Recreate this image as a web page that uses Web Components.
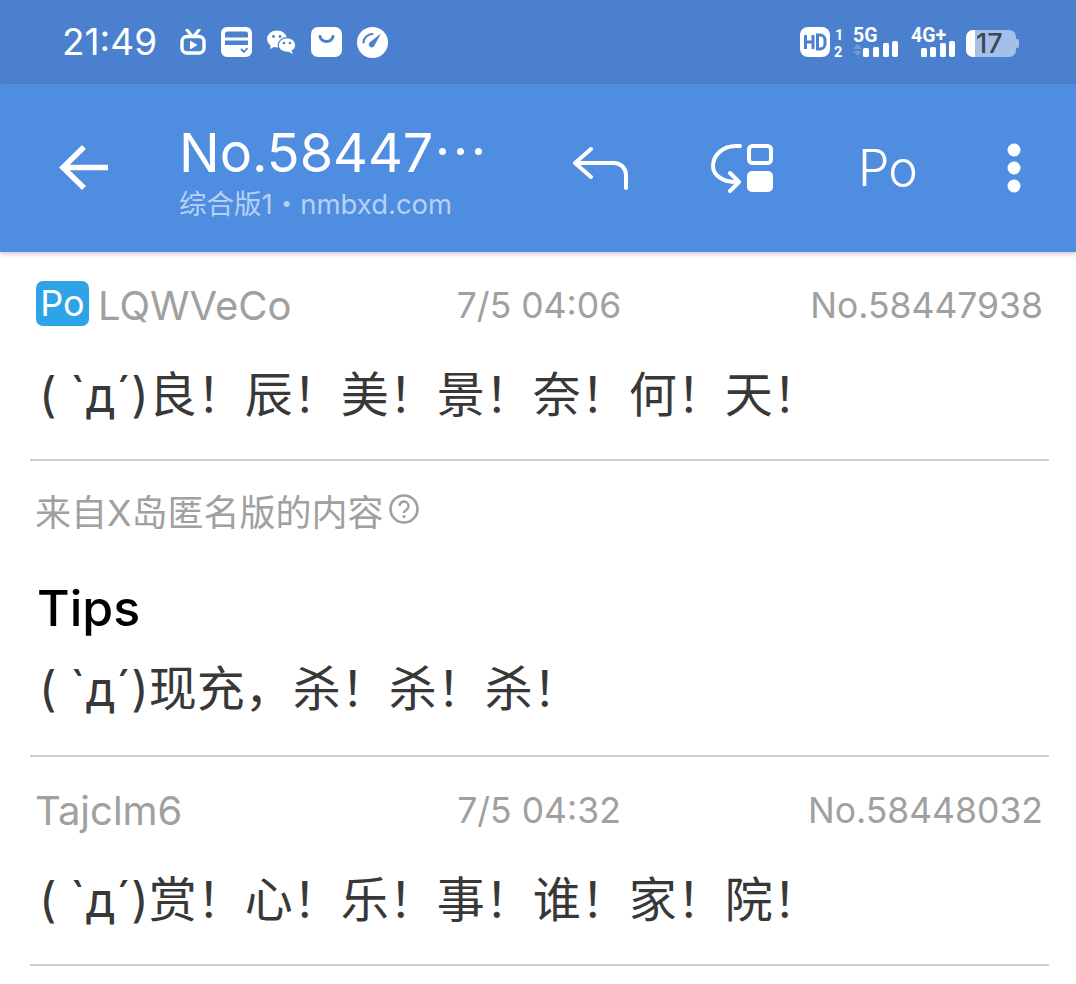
<!DOCTYPE html>
<html lang="zh">
<head>
<meta charset="utf-8">
<title>No.58447938</title>
<style>
  html, body { margin: 0; padding: 0; background: #fff; }
  body { font-family: Inter, "Noto Sans CJK SC", sans-serif; width: 1076px; height: 984px; overflow: hidden; }
</style>
</head>
<body>
<status-bar></status-bar>
<app-bar></app-bar>
<thread-post user="LQWVeCo" time="7/5 04:06" no="No.58447938" po>
  ( `д´)良！辰！美！景！奈！何！天！
</thread-post>
<tip-post heading="Tips">( `д´)现充，杀！杀！杀！</tip-post>
<thread-post user="Tajclm6" time="7/5 04:32" no="No.58448032">
  ( `д´)赏！心！乐！事！谁！家！院！
</thread-post>

<script>
class StatusBar extends HTMLElement {
    constructor() {
        super();
        this.shadowDOM = this.attachShadow({mode: "open"});
    }

    connectedCallback() {
        this.shadowDOM.innerHTML = `
           <style>
               :host {
                   display: flex;
                   align-items: center;
                   height: 84px;
                   background: #4a80cd;
                   color: #fff;
                   padding: 0 57px 0 62px;
                   box-sizing: border-box;
               }
               .time { font-size: 37px; line-height: 88px; width: 118px; }
               .left { display: flex; align-items: center; gap: 15px; }
               .right { margin-left: auto; display: flex; align-items: center; }
               svg { display: block; }
               .net { font: 700 19.500px Roboto, sans-serif; fill: #fff; }
               .battery { position: relative; width: 53px; height: 27px; margin-top: 3px; }
               .battery b {
                   position: absolute; left: 0; top: 0; bottom: 0; width: 50px;
                   border-radius: 7px;
                   background: linear-gradient(90deg, #fff 0 9px, #a4c0e8 9px);
                   font: 500 27px/28px Inter, sans-serif;
                   color: #3d4756;
                   text-indent: 10px;
               }
               .battery i { position: absolute; right: 0; top: 9px; width: 3px; height: 9px; background: #a4c0e8; border-radius: 0 2px 2px 0; }
           </style>
           <div class="time">21:49</div>
           <div class="left">
               <svg width="26" height="26" viewBox="0 0 26 26">
                   <path d="M7 1l5 6M19 1l-5 6" stroke="#fff" stroke-width="3" stroke-linecap="round"/>
                   <rect x="2" y="7.500" width="22" height="16.500" rx="5" fill="none" stroke="#fff" stroke-width="3.400"/>
                   <path d="M10 11.500v9l7.500-4.500z" fill="#fff"/>
               </svg>
               <svg width="31" height="30" viewBox="0 0 31 30">
                   <path fill="#fff" fill-rule="evenodd" d="M6 0h19a6 6 0 0 1 6 6v18a6 6 0 0 1-6 6H6a6 6 0 0 1-6-6V6a6 6 0 0 1 6-6zM4 7v3.500h23V7a2.500 2.500 0 0 0-2.500-2.500h-18A2.500 2.500 0 0 0 4 7zm0 6.500V18h23v-4.500z"/>
                   <path d="M20 22l3 3 3.500-4" fill="none" stroke="#4a80cd" stroke-width="1.800"/>
               </svg>
               <svg width="29" height="24" viewBox="0 0 29 24">
                   <ellipse cx="10" cy="9" rx="10" ry="8.500" fill="#fff"/>
                   <path d="M4 14l-1 5 6-3z" fill="#fff"/>
                   <circle cx="6.500" cy="6.500" r="1.400" fill="#4a80cd"/>
                   <circle cx="13" cy="6.500" r="1.400" fill="#4a80cd"/>
                   <ellipse cx="20" cy="15" rx="8.800" ry="7.300" fill="#fff" stroke="#4a80cd" stroke-width="1.200"/>
                   <path d="M24 20l2 4-5-2.500z" fill="#fff"/>
                   <circle cx="17" cy="13" r="1.300" fill="#4a80cd"/>
                   <circle cx="23" cy="13" r="1.300" fill="#4a80cd"/>
               </svg>
               <svg width="31" height="30" viewBox="0 0 31 30">
                   <rect width="31" height="30" rx="7" fill="#fff"/>
                   <path d="M9 9.500c1.500 6.500 11.500 6.500 13 0" fill="none" stroke="#4a80cd" stroke-width="3" stroke-linecap="round"/>
               </svg>
               <svg width="31" height="31" viewBox="0 0 31 31">
                   <circle cx="15.500" cy="15.500" r="15.500" fill="#fff"/>
                   <path d="M15.500 7a9 9 0 0 0-9 8.500" fill="none" stroke="#4a80cd" stroke-width="2.200" stroke-linecap="round"/>
                   <path d="M24 6.500L12.500 15.500a3 3 0 0 0 4.200 4.200z" fill="#4a80cd"/>
               </svg>
           </div>
           <div class="right">
               <svg width="44" height="41" viewBox="0 -5 44 41">
                   <rect width="30" height="30" rx="8" fill="#fff"/>
                   <path d="M5.500 8v14M13 8v14M5.500 15H13M17.500 8v14h2.500a5 5 0 0 0 5-5v-4a5 5 0 0 0-5-5z" fill="none" stroke="#4a80cd" stroke-width="3"/>
                   <text x="35" y="13" font-family="Roboto" font-size="14.500" font-weight="700" fill="#fff">1</text>
                   <text x="34" y="30" font-family="Roboto" font-size="14.500" font-weight="700" fill="#fff">2</text>
               </svg>
               <svg width="46" height="41" viewBox="0 -5 46 41" style="margin-left:9px">
                   <text class="net" x="0" y="15">5G</text>
                   <path d="M0 22l4.500-5 4.500 5zM0 24h9l-4.500 5z" fill="#6d9ad9"/>
                   <rect x="10" y="21" width="6" height="9" rx="1.500" fill="#fff"/>
                   <rect x="20" y="20" width="6" height="10" rx="1.500" fill="#fff"/>
                   <rect x="30" y="16" width="6" height="14" rx="1.500" fill="#fff"/>
                   <rect x="39" y="14" width="6" height="16" rx="2" fill="#fff"/>
               </svg>
               <svg width="46" height="41" viewBox="0 -5 46 41" style="margin-left:12px">
                   <text class="net" x="0" y="15">4G+</text>
                   <rect x="10" y="21" width="6" height="9" rx="1.500" fill="#fff"/>
                   <rect x="19" y="20" width="6" height="10" rx="1.500" fill="#fff"/>
                   <rect x="29" y="16" width="6" height="14" rx="1.500" fill="#fff"/>
                   <rect x="38" y="14" width="6" height="16" rx="2" fill="#fff"/>
               </svg>
               <div class="battery" style="margin-left:9px"><b>17</b><i></i></div>
           </div>`;
    }
}

class AppBar extends HTMLElement {
    constructor() {
        super();
        this.shadowDOM = this.attachShadow({mode: "open"});
    }

    connectedCallback() {
        this.shadowDOM.innerHTML = `
           <style>
               :host {
                   display: flex;
                   align-items: center;
                   position: relative;
                   height: 168px;
                   background: #4f8de0;
                   color: #fff;
                   box-shadow: 0 2px 5px rgba(0, 0, 0, .22);
                   padding: 0 0 0 58px;
                   box-sizing: border-box;
               }
               svg { display: block; flex: none; }
               .titles { margin-left: 69px; width: 394px; white-space: nowrap; flex: none; }
               .title { font-size: 54px; line-height: 64px; margin-top: 3px; }
               .title i { font: normal 54px/64px "Noto Sans CJK SC", sans-serif; }
               .sub { font-size: 27.500px; line-height: 38px; color: #b6d1f4; }
               .po { font-size: 50px; font-weight: 300; line-height: 60px; margin-left: 82px; width: 56px; flex: none; letter-spacing: -1px; }
           </style>
           <svg width="52" height="50" viewBox="0 0 52 50">
               <path d="M50 24.500H6M26 4L5 24.500 26 45" fill="none" stroke="#fff" stroke-width="5.500"/>
           </svg>
           <div class="titles">
               <div class="title">No.58447<i>…</i></div>
               <div class="sub">综合版1・nmbxd.com</div>
           </div>
           <svg width="56" height="44" viewBox="0 0 56 44">
               <path d="M18 3L2 17l16 14M3 17h38a12 12 0 0 1 12 12v13" fill="none" stroke="#fff" stroke-width="4" stroke-linecap="round" stroke-linejoin="round"/>
           </svg>
           <svg width="66" height="50" viewBox="0 0 66 50" style="margin-left:81px">
               <path d="M30 3H26C13 3 3 12 3 23C3 33 14 39 26 39H28M20 30l9 9-9 9" fill="none" stroke="#fff" stroke-width="4" stroke-linecap="round" stroke-linejoin="round"/>
               <rect x="39" y="3" width="22" height="17" rx="3.500" fill="none" stroke="#fff" stroke-width="4"/>
               <rect x="37" y="28" width="26" height="21" rx="5" fill="#fff"/>
           </svg>
           <div class="po">Po</div>
           <svg width="14" height="50" viewBox="0 0 14 50" style="margin-left:93px">
               <circle cx="7" cy="7" r="6.500" fill="#fff"/>
               <circle cx="7" cy="25" r="6.500" fill="#fff"/>
               <circle cx="7" cy="43" r="6.500" fill="#fff"/>
           </svg>`;
    }
}

class ThreadPost extends HTMLElement {
    constructor() {
        super();
        this.shadowDOM = this.attachShadow({mode: "open"});
    }

    connectedCallback() {
        const po = this.hasAttribute("po") ? `<span class="badge">Po</span>` : "";
        this.shadowDOM.innerHTML = `
           <style>
               :host {
                   display: block;
                   margin: 0 27px 0 30px;
                   height: 209px;
                   border-bottom: 2px solid #cfcfcf;
                   box-sizing: border-box;
               }
               .head {
                   display: grid;
                   grid-template-columns: 1fr auto 1fr;
                   align-items: center;
                   height: 54px;
                   padding: 26px 6px 0 5px;
                   color: #a0a0a0;
                   font-size: 35.500px;
               }
               .user { display: flex; align-items: center; gap: 9px; font-size: 40px; }
               .badge {
                   width: 53px;
                   height: 45px;
                   line-height: 45px;
                   margin: -4px 0 0 1px;
                   border-radius: 7px;
                   background: #2ea4e8;
                   color: #fff;
                   text-align: center;
                   font-size: 36px;
               }
               .no { text-align: right; }
               .body {
                   padding: 28px 0 0 9px;
                   font-size: 48px;
                   line-height: 70px;
                   color: #383838;
                   white-space: nowrap;
               }
           </style>
           <div class="head">
               <div class="user">${po}<span>${this.getAttribute("user")}</span></div>
               <div class="time">${this.getAttribute("time")}</div>
               <div class="no">${this.getAttribute("no")}</div>
           </div>
           <div class="body"><slot></slot></div>`;
    }
}

class TipPost extends HTMLElement {
    constructor() {
        super();
        this.shadowDOM = this.attachShadow({mode: "open"});
    }

    connectedCallback() {
        this.shadowDOM.innerHTML = `
           <style>
               :host {
                   display: block;
                   margin: 0 27px 0 30px;
                   height: 296px;
                   border-bottom: 2px solid #cfcfcf;
                   box-sizing: border-box;
               }
               .from {
                   display: flex;
                   align-items: center;
                   gap: 5px;
                   padding: 26px 0 0 5px;
                   height: 46px;
                   font-size: 36px;
                   color: #a0a0a0;
               }
               h2 {
                   margin: 0;
                   padding: 45px 0 0 7px;
                   font-size: 50px;
                   line-height: 60px;
                   font-weight: 500;
                   color: #000;
               }
               .body {
                   padding: 16px 0 0 9px;
                   font-size: 48px;
                   line-height: 70px;
                   color: #383838;
                   white-space: nowrap;
               }
           </style>
           <div class="from">来自X岛匿名版的内容
               <svg width="30" height="30" viewBox="0 0 30 30" style="margin-top:-3px">
                   <circle cx="15" cy="15" r="13.500" fill="none" stroke="#a0a0a0" stroke-width="2.600"/>
                   <path d="M10.500 12a4.500 4.500 0 1 1 7 3.700c-1.500 1-2.500 1.800-2.500 3.300" fill="none" stroke="#a0a0a0" stroke-width="2.400"/>
                   <circle cx="15" cy="22.500" r="1.600" fill="#a0a0a0"/>
               </svg>
           </div>
           <h2>${this.getAttribute("heading")}</h2>
           <div class="body"><slot></slot></div>`;
    }
}

customElements.define("status-bar", StatusBar);
customElements.define("app-bar", AppBar);
customElements.define("thread-post", ThreadPost);
customElements.define("tip-post", TipPost);
</script>
</body>
</html>
